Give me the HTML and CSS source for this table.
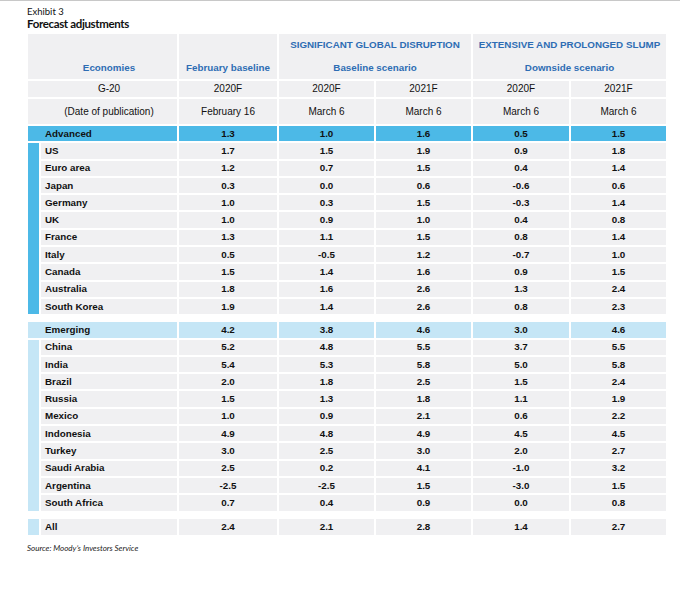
FILE: index.html
```html
<!DOCTYPE html>
<html lang="en">
<head>
<meta charset="utf-8">
<title>Forecast adjustments</title>
<link rel="stylesheet" href="styles.css">
</head>
<body>
<div class="page">
  <div class="exhibit">Exhibit 3</div>
  <div class="title">Forecast adjustments</div>
  <div class="tbl">
    <div class="hd econ">Economies</div>
    <div class="hd feb">February baseline</div>
    <div class="hd grp g1"><span>SIGNIFICANT GLOBAL DISRUPTION</span><span>Baseline scenario</span></div>
    <div class="hd grp g2"><span>EXTENSIVE AND PROLONGED SLUMP</span><span>Downside scenario</span></div>

    <div class="c lab">G-20</div>
    <div class="c reg">2020F</div><div class="c reg">2020F</div><div class="c reg">2021F</div><div class="c reg">2020F</div><div class="c reg">2021F</div>

    <div class="c lab">(Date of publication)</div>
    <div class="c reg">February 16</div><div class="c reg">March 6</div><div class="c reg">March 6</div><div class="c reg">March 6</div><div class="c reg">March 6</div>

    <div class="c grouprow adv">Advanced</div>
    <div class="c v adv">1.3</div><div class="c v adv">1.0</div><div class="c v adv">1.6</div><div class="c v adv">0.5</div><div class="c v adv">1.5</div>

    <div class="strip dark span10"></div>
    <div class="c name">US</div><div class="c v">1.7</div><div class="c v">1.5</div><div class="c v">1.9</div><div class="c v">0.9</div><div class="c v">1.8</div>
    <div class="c name">Euro area</div><div class="c v">1.2</div><div class="c v">0.7</div><div class="c v">1.5</div><div class="c v">0.4</div><div class="c v">1.4</div>
    <div class="c name">Japan</div><div class="c v">0.3</div><div class="c v">0.0</div><div class="c v">0.6</div><div class="c v">-0.6</div><div class="c v">0.6</div>
    <div class="c name">Germany</div><div class="c v">1.0</div><div class="c v">0.3</div><div class="c v">1.5</div><div class="c v">-0.3</div><div class="c v">1.4</div>
    <div class="c name">UK</div><div class="c v">1.0</div><div class="c v">0.9</div><div class="c v">1.0</div><div class="c v">0.4</div><div class="c v">0.8</div>
    <div class="c name">France</div><div class="c v">1.3</div><div class="c v">1.1</div><div class="c v">1.5</div><div class="c v">0.8</div><div class="c v">1.4</div>
    <div class="c name">Italy</div><div class="c v">0.5</div><div class="c v">-0.5</div><div class="c v">1.2</div><div class="c v">-0.7</div><div class="c v">1.0</div>
    <div class="c name">Canada</div><div class="c v">1.5</div><div class="c v">1.4</div><div class="c v">1.6</div><div class="c v">0.9</div><div class="c v">1.5</div>
    <div class="c name">Australia</div><div class="c v">1.8</div><div class="c v">1.6</div><div class="c v">2.6</div><div class="c v">1.3</div><div class="c v">2.4</div>
    <div class="c name">South Korea</div><div class="c v">1.9</div><div class="c v">1.4</div><div class="c v">2.6</div><div class="c v">0.8</div><div class="c v">2.3</div>

    <div class="spacer"></div>

    <div class="c grouprow emg">Emerging</div>
    <div class="c v emg">4.2</div><div class="c v emg">3.8</div><div class="c v emg">4.6</div><div class="c v emg">3.0</div><div class="c v emg">4.6</div>

    <div class="strip light span10"></div>
    <div class="c name">China</div><div class="c v">5.2</div><div class="c v">4.8</div><div class="c v">5.5</div><div class="c v">3.7</div><div class="c v">5.5</div>
    <div class="c name">India</div><div class="c v">5.4</div><div class="c v">5.3</div><div class="c v">5.8</div><div class="c v">5.0</div><div class="c v">5.8</div>
    <div class="c name">Brazil</div><div class="c v">2.0</div><div class="c v">1.8</div><div class="c v">2.5</div><div class="c v">1.5</div><div class="c v">2.4</div>
    <div class="c name">Russia</div><div class="c v">1.5</div><div class="c v">1.3</div><div class="c v">1.8</div><div class="c v">1.1</div><div class="c v">1.9</div>
    <div class="c name">Mexico</div><div class="c v">1.0</div><div class="c v">0.9</div><div class="c v">2.1</div><div class="c v">0.6</div><div class="c v">2.2</div>
    <div class="c name">Indonesia</div><div class="c v">4.9</div><div class="c v">4.8</div><div class="c v">4.9</div><div class="c v">4.5</div><div class="c v">4.5</div>
    <div class="c name">Turkey</div><div class="c v">3.0</div><div class="c v">2.5</div><div class="c v">3.0</div><div class="c v">2.0</div><div class="c v">2.7</div>
    <div class="c name">Saudi Arabia</div><div class="c v">2.5</div><div class="c v">0.2</div><div class="c v">4.1</div><div class="c v">-1.0</div><div class="c v">3.2</div>
    <div class="c name">Argentina</div><div class="c v">-2.5</div><div class="c v">-2.5</div><div class="c v">1.5</div><div class="c v">-3.0</div><div class="c v">1.5</div>
    <div class="c name">South Africa</div><div class="c v">0.7</div><div class="c v">0.4</div><div class="c v">0.9</div><div class="c v">0.0</div><div class="c v">0.8</div>

    <div class="spacer"></div>

    <div class="strip light"></div>
    <div class="c name">All</div><div class="c v">2.4</div><div class="c v">2.1</div><div class="c v">2.8</div><div class="c v">1.4</div><div class="c v">2.7</div>
  </div>
  <div class="source">Source: Moody’s Investors Service</div>
</div>
</body>
</html>
```

FILE: styles.css
```css
html, body {
  margin: 0;
  padding: 0;
  background: #ffffff;
}

body {
  border-top: 1px solid #c8c8c8;
}

.page {
  padding: 6px 0 0 27px;
  width: 640px;
}

.exhibit {
  font-family: Lato, "Open Sans", sans-serif;
  font-size: 9.5px;
  line-height: 10px;
  color: #111;
}

.title {
  font-family: Lato, "Open Sans", sans-serif;
  font-size: 11.5px;
  font-weight: 700;
  letter-spacing: -0.35px;
  line-height: 14px;
  color: #111;
  margin-bottom: 3px;
}

.tbl {
  display: grid;
  margin-left: 1px;
  grid-template-columns: 11px 136px 98px 95px 95px 96px 95px;
  grid-template-rows: 45px 16px 25px repeat(11, 15.3px) 4px repeat(11, 15.3px) 4px 16px;
  gap: 2px;
  font-family: "Liberation Sans", Arial, sans-serif;
  font-size: 9.8px;
  color: #111;
}

.hd {
  background: #f0f0f2;
  color: #2e6db4;
  font-weight: 700;
  display: flex;
  flex-direction: column;
  align-items: center;
  justify-content: flex-end;
  padding-bottom: 5px;
  line-height: 12px;
}

.econ {
  grid-column: 1 / 3;
  padding-left: 13px;
}

.feb {
  grid-column: 3;
}

.grp {
  justify-content: space-between;
  padding-top: 5px;
}

.g1 {
  grid-column: 4 / 6;
}

.g2 {
  grid-column: 6 / 8;
}

.c {
  background: #f0f0f2;
  display: flex;
  align-items: center;
  justify-content: center;
  line-height: 12px;
  white-space: nowrap;
}

.lab {
  grid-column: 1 / 3;
  padding-left: 13px;
  font-size: 10px;
}

.reg {
  font-size: 10px;
}

.v {
  font-weight: 700;
}

.grouprow {
  grid-column: 1 / 3;
  justify-content: flex-start;
  padding-left: 17px;
  font-weight: 700;
}

.name {
  grid-column: 2;
  justify-content: flex-start;
  padding-left: 4px;
  font-weight: 700;
}

.adv {
  background: #4cb9e7;
}

.emg {
  background: #c5e6f6;
}

.strip {
  grid-column: 1;
}

.span10 {
  grid-row: span 10;
}

.strip.dark {
  background: #4cb9e7;
}

.strip.light {
  background: #c5e6f6;
}

.spacer {
  grid-column: 1 / -1;
}

.source {
  font-family: Lato, "Open Sans", sans-serif;
  font-style: italic;
  font-size: 8px;
  line-height: 12px;
  color: #222;
  margin-top: 7px;
}
```
